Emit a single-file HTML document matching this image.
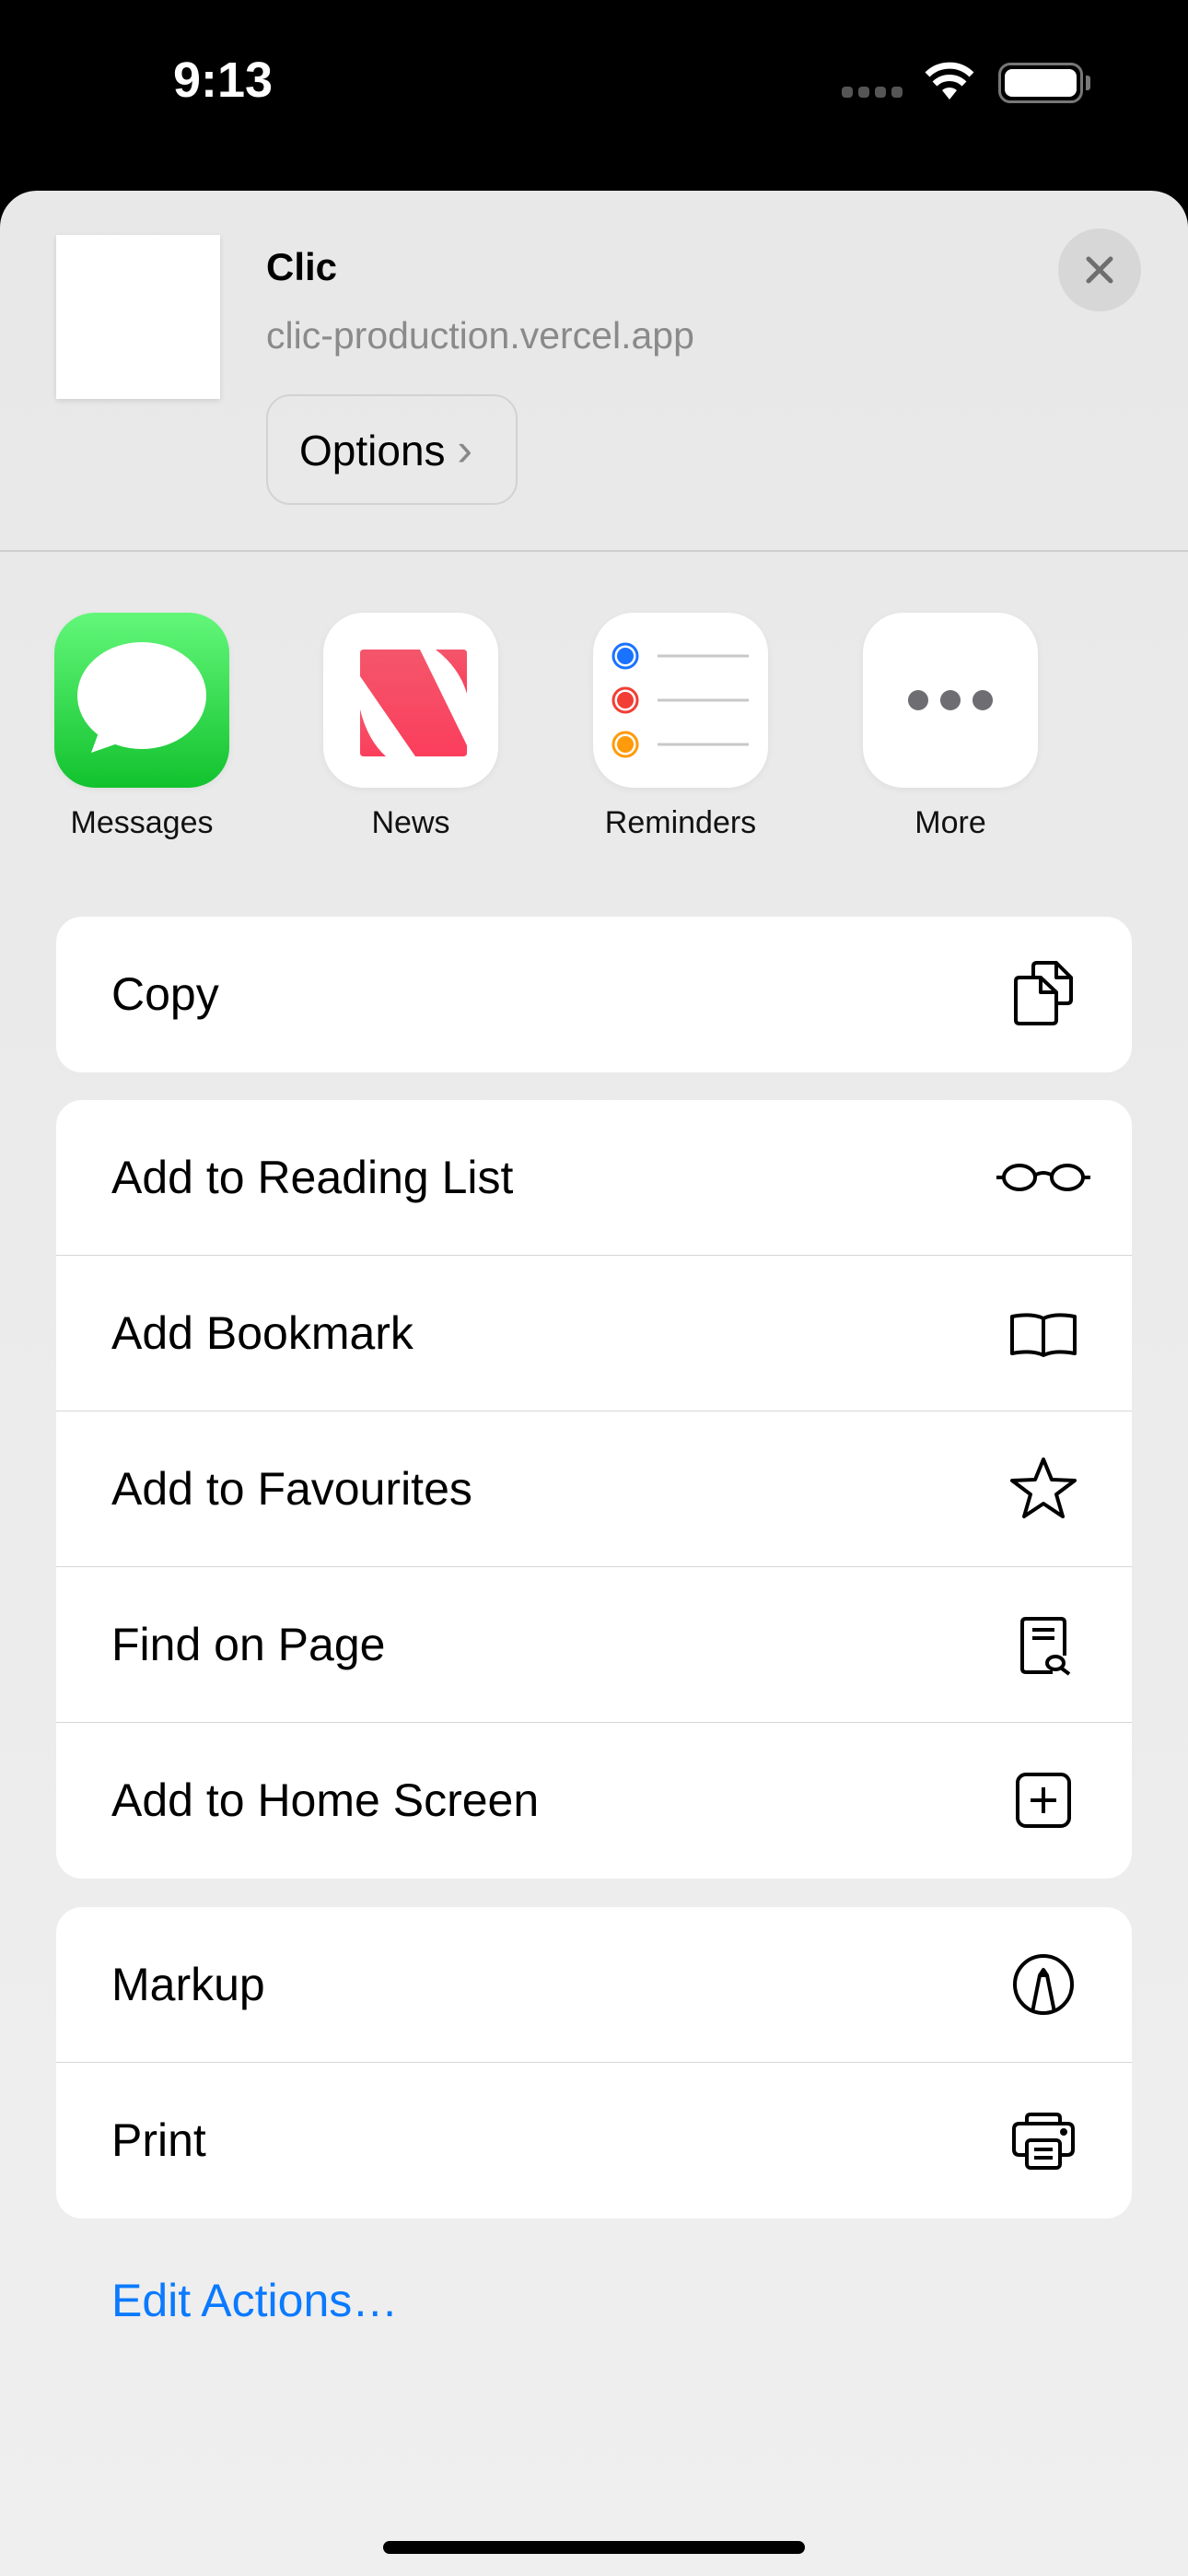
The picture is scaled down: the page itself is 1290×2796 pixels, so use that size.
<!DOCTYPE html>
<html><head><meta charset="utf-8"><style>
*{margin:0;padding:0;box-sizing:border-box}
body{width:1290px;height:2796px;background:#000;font-family:"Liberation Sans",sans-serif;position:relative;overflow:hidden}
.abs{position:absolute}
.sheet{position:absolute;left:0;top:207px;width:1290px;height:2589px;background:linear-gradient(#e8e8e8,#efefef);border-radius:40px 40px 0 0}
.group{position:absolute;left:61px;width:1168px;background:#fff;border-radius:28px;overflow:hidden}
.row{height:169px;position:relative;border-bottom:1.5px solid #d6d6d6;font-size:50px;color:#000;line-height:169px;padding-left:60px}
.row:last-child{border-bottom:none}
.row svg{position:absolute;left:1032px;top:44px}
.icon{position:absolute;top:665px;width:190px;height:190px;border-radius:44px;background:#fff;box-shadow:0 2px 8px rgba(0,0,0,.05)}
.lbl{position:absolute;top:874px;width:260px;text-align:center;font-size:34px;color:#111}
</style></head><body>
<div class="abs" style="left:188px;top:56px;font-size:54px;font-weight:bold;color:#fff">9:13</div>
<div class="abs" style="left:914px;top:94px;width:68px;height:12px">
<span class="abs" style="left:0;width:12px;height:12px;border-radius:4px;background:#555"></span>
<span class="abs" style="left:18px;width:12px;height:12px;border-radius:4px;background:#555"></span>
<span class="abs" style="left:36px;width:12px;height:12px;border-radius:4px;background:#555"></span>
<span class="abs" style="left:54px;width:12px;height:12px;border-radius:4px;background:#555"></span></div>
<svg class="abs" style="left:1002px;top:64px" width="58" height="46" viewBox="0 0 58 46"><path d="M29 44 L21 34 A12 12 0 0 1 37 34Z" fill="#fff"/><path d="M13 27 A23 23 0 0 1 45 27" stroke="#fff" stroke-width="7" fill="none"/><path d="M5 17 A34 34 0 0 1 53 17" stroke="#fff" stroke-width="7" fill="none"/></svg>
<div class="abs" style="left:1084px;top:68px;width:92px;height:44px;border:3px solid #777;border-radius:13px"><div style="margin:4px;height:30px;background:#fff;border-radius:8px"></div></div>
<div class="abs" style="left:1179px;top:82px;width:5px;height:16px;background:#777;border-radius:0 3px 3px 0"></div>

<div class="sheet"></div>
<div class="abs" style="left:61px;top:255px;width:178px;height:178px;background:#fff;box-shadow:0 2px 6px rgba(0,0,0,.12)"></div>
<div class="abs" style="left:289px;top:266px;font-size:42px;font-weight:bold">Clic</div>
<div class="abs" style="left:289px;top:341px;font-size:41px;color:#8a8a8a">clic-production.vercel.app</div>
<div class="abs" style="left:289px;top:428px;width:273px;height:120px;border:2px solid #d2d2d2;border-radius:26px;font-size:46px;line-height:116px;padding-left:34px">Options <span style="color:#888;font-size:50px">›</span></div>
<div class="abs" style="left:1149px;top:248px;width:90px;height:90px;border-radius:50%;background:#d7d7d7"><svg width="90" height="90"><path d="M33 33L57 57M57 33L33 57" stroke="#6e6e6e" stroke-width="5" stroke-linecap="round"/></svg></div>
<div class="abs" style="left:0;top:597px;width:1290px;height:2px;background:#cfcfcf"></div>

<div class="icon" style="left:59px;background:linear-gradient(#63f77a,#12c22e)"><svg width="190" height="190"><ellipse cx="95" cy="90" rx="70" ry="58" fill="#fff"/><path d="M50 125 L40 152 L80 138Z" fill="#fff"/></svg></div>
<div class="icon" style="left:351px"><svg width="190" height="190"><defs><linearGradient id="n" x1="0" y1="0" x2="0" y2="1"><stop offset="0" stop-color="#f4566b"/><stop offset="1" stop-color="#fb3e5c"/></linearGradient></defs><g fill="url(#n)"><path d="M44 40 H105 L156 144 V152 Q156 156 152 156 H100 L40 69 V44 Q40 40 44 40 Z"/><path d="M122 40 H152 Q156 40 156 44 V88 Q148 60 122 40 Z"/><path d="M40 105 Q48 138 68 156 H44 Q40 156 40 152 Z"/></g></svg></div>
<div class="icon" style="left:644px"><svg width="190" height="190"><circle cx="35" cy="47" r="13" fill="#fff" stroke="#1a73ff" stroke-width="3"/><circle cx="35" cy="47" r="9" fill="#1a73ff"/><circle cx="35" cy="95" r="13" fill="#fff" stroke="#f23e35" stroke-width="3"/><circle cx="35" cy="95" r="9" fill="#f23e35"/><circle cx="35" cy="143" r="13" fill="#fff" stroke="#ff9a0a" stroke-width="3"/><circle cx="35" cy="143" r="9" fill="#ff9a0a"/><path d="M70 47H169M70 95H169M70 143H169" stroke="#c8c8c8" stroke-width="3"/></svg></div>
<div class="icon" style="left:937px"><svg width="190" height="190"><circle cx="60" cy="95" r="11" fill="#6d6d72"/><circle cx="95" cy="95" r="11" fill="#6d6d72"/><circle cx="130" cy="95" r="11" fill="#6d6d72"/></svg></div>
<div class="lbl" style="left:24px">Messages</div>
<div class="lbl" style="left:316px">News</div>
<div class="lbl" style="left:609px">Reminders</div>
<div class="lbl" style="left:902px">More</div>

<div class="group" style="top:995px">
<div class="row">Copy<svg width="80" height="80" viewBox="0 0 80 80" fill="none" stroke="#000" stroke-width="4" stroke-linejoin="round"><path d="M29 20V10Q29 6 33 6H54L70 22V46Q70 50 66 50H56"/><path d="M54 6V22H70"/><path d="M10 26Q10 22 14 22H37L54 38V68Q54 72 50 72H14Q10 72 10 68Z"/><path d="M37 22V38H54"/></svg></div>
</div>
<div class="group" style="top:1194px">
<div class="row">Add to Reading List<svg width="110" height="80" viewBox="0 0 110 80" style="left:1017px" fill="none" stroke="#000" stroke-width="4"><path d="M4 40H13M97 40H106M45 38Q55 32 65 38"/><ellipse cx="29" cy="40" rx="17" ry="13"/><ellipse cx="81" cy="40" rx="17" ry="13"/></svg></div>
<div class="row">Add Bookmark<svg width="80" height="80" viewBox="0 0 80 80" fill="none" stroke="#000" stroke-width="4" stroke-linejoin="round"><path d="M40 24Q28 18 6 22V62Q28 58 40 64Q52 58 74 62V22Q52 18 40 24Z M40 24V64"/></svg></div>
<div class="row">Add to Favourites<svg width="80" height="80" viewBox="0 0 80 80" fill="none" stroke="#000" stroke-width="4" stroke-linejoin="round"><path d="M40 8L49 30L74 31L54 46L61 70L40 56L19 70L26 46L6 31L31 30Z"/></svg></div>
<div class="row">Find on Page<svg width="80" height="80" viewBox="0 0 80 80" fill="none" stroke="#000" stroke-width="4" stroke-linejoin="round"><path d="M50 70H21Q17 70 17 66V16Q17 12 21 12H59Q63 12 63 16V52"/><path d="M28 24H52M28 33H52" /><ellipse cx="53" cy="60" rx="9" ry="7"/><path d="M60 66L68 72"/></svg></div>
<div class="row">Add to Home Screen<svg width="80" height="80" viewBox="0 0 80 80" fill="none" stroke="#000" stroke-width="4"><rect x="12" y="12" width="56" height="56" rx="9"/><path d="M40 26V54M26 40H54"/></svg></div>
</div>
<div class="group" style="top:2070px">
<div class="row">Markup<svg width="80" height="80" viewBox="0 0 80 80" fill="none" stroke="#000" stroke-width="4" stroke-linejoin="round"><circle cx="40" cy="40" r="31"/><path d="M28 70L36 30L40 24L44 30L52 70M36 30H44"/></svg></div>
<div class="row">Print<svg width="80" height="80" viewBox="0 0 80 80" fill="none" stroke="#000" stroke-width="4" stroke-linejoin="round"><path d="M22 22V16Q22 12 26 12H54Q58 12 58 16V22"/><path d="M22 56H14Q8 56 8 50V28Q8 22 14 22H66Q72 22 72 28V50Q72 56 66 56H58"/><rect x="22" y="40" width="36" height="30" rx="4"/><path d="M30 50H50M30 59H50"/><circle cx="62" cy="31" r="2" fill="#000"/></svg></div>
</div>
<div class="abs" style="left:121px;top:2468px;font-size:50px;color:#0a7aff">Edit Actions…</div>
<div class="abs" style="left:416px;top:2758px;width:458px;height:14px;border-radius:7px;background:#000"></div>
</body></html>
